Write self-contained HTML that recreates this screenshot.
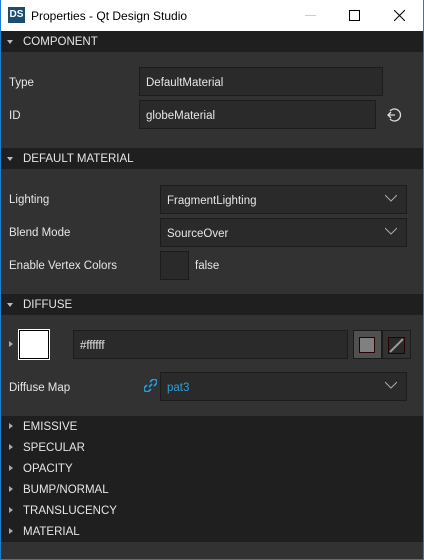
<!DOCTYPE html>
<html><head><style>
*{margin:0;padding:0;box-sizing:border-box}
body{width:424px;height:560px;background:#1a7fd4;font-family:"Liberation Sans",sans-serif;overflow:hidden;position:relative}
.win{position:absolute;left:1px;top:0;width:422px;height:559px;background:#323232}
.title{position:absolute;left:0;top:0;width:422px;height:31px;background:#fff;color:#000;font-size:12px}
.a{position:absolute}
.hdr{position:absolute;left:0;width:422px;height:21px;background:#1f1f1f;color:#e6e6e6;font-size:11.5px;line-height:23px}
.hdr span{position:absolute;left:22px}
.tri{position:absolute;left:6px;top:9px;width:0;height:0;border-left:3.5px solid transparent;border-right:3.5px solid transparent;border-top:4px solid #bbb}
.tr{position:absolute;left:8px;top:7px;width:0;height:0;border-top:3.5px solid transparent;border-bottom:3.5px solid transparent;border-left:4px solid #aaa}
.lbl{position:absolute;color:#e6e6e6;font-size:11.5px;margin-top:2px}
.fld{position:absolute;background:#2a2a2a;border:1px solid #1c1c1c;color:#e6e6e6;font-size:11.5px;line-height:30px;padding-left:6px}
.chev{position:absolute;right:9px;top:8px}
</style></head><body>
<div class="win">
<div class="title">
 <div class="a" style="left:7px;top:7px;width:17px;height:16px;background:#1b4f72;color:#fff;font-size:10px;font-weight:bold;line-height:16px;text-align:center">DS</div>
 <div class="a" style="left:30px;top:9px">Properties - Qt Design Studio</div>
 <div class="a" style="left:304px;top:15px;width:11px;height:1px;background:#ccc"></div>
 <div class="a" style="left:348px;top:10px;width:11px;height:11px;border:1px solid #000"></div>
 <svg class="a" style="left:393px;top:10px" width="11" height="11"><path d="M0 0L11 11M11 0L0 11" stroke="#000" stroke-width="1"/></svg>
</div>
<div class="hdr" style="top:31px"><div class="tri"></div><span>COMPONENT</span></div>
<div class="lbl" style="left:8px;top:75px">Type</div>
<div class="fld" style="left:138px;top:67px;width:244px;height:29px">DefaultMaterial</div>
<div class="lbl" style="left:8px;top:108px">ID</div>
<div class="fld" style="left:138px;top:100px;width:237px;height:29px">globeMaterial</div>
<svg class="a" style="left:385px;top:107px" width="16" height="16"><path d="M4 4A6 6 0 1 1 4 12" fill="none" stroke="#ddd" stroke-width="1.3"/><path d="M2 8H9M5 5L2 8L5 11" fill="none" stroke="#ddd" stroke-width="1.3"/></svg>
<div class="hdr" style="top:148px"><div class="tri"></div><span>DEFAULT MATERIAL</span></div>
<div class="lbl" style="left:8px;top:192px">Lighting</div>
<div class="fld" style="left:159px;top:185px;width:247px;height:29px">FragmentLighting<svg class="chev" width="12" height="8"><path d="M0 1L6 7L12 1" fill="none" stroke="#aaa"/></svg></div>
<div class="lbl" style="left:8px;top:225px">Blend Mode</div>
<div class="fld" style="left:159px;top:218px;width:247px;height:29px">SourceOver<svg class="chev" width="12" height="8"><path d="M0 1L6 7L12 1" fill="none" stroke="#aaa"/></svg></div>
<div class="lbl" style="left:8px;top:258px">Enable Vertex Colors</div>
<div class="fld" style="left:159px;top:251px;width:29px;height:29px"></div>
<div class="lbl" style="left:194px;top:258px">false</div>
<div class="hdr" style="top:294px"><div class="tri"></div><span>DIFFUSE</span></div>
<div class="tr" style="left:8px;top:341px"></div>
<div class="a" style="left:18px;top:330px;width:30px;height:29px;border:1px solid #000;background:#fff;outline:1px solid #fff"></div>
<div class="fld" style="left:72px;top:330px;width:275px;height:29px">#ffffff</div>
<div class="a" style="left:352px;top:330px;width:29px;height:29px;background:#505050;border:1px solid #1c1c1c"></div>
<div class="a" style="left:358px;top:337px;width:16px;height:16px;background:#808080;border:1px solid #2a0000"></div>
<div class="a" style="left:381px;top:330px;width:29px;height:29px;background:#323232;border:1px solid #1c1c1c"></div>
<svg class="a" style="left:387px;top:337px" width="17" height="17"><rect x=".5" y=".5" width="16" height="16" fill="#2a2a2a" stroke="#2a0000"/><path d="M2 15L15 2" stroke="#999" stroke-width="2"/></svg>
<div class="lbl" style="left:8px;top:380px">Diffuse Map</div>
<svg class="a" style="left:143px;top:379px" width="13" height="13"><path d="M5 8L8 5M6 3L8 1A2 2 0 0 1 12 5L10 7M7 10L5 12A2 2 0 0 1 1 8L3 6" fill="none" stroke="#2b9fd8" stroke-width="1.6"/></svg>
<div class="fld" style="left:159px;top:372px;width:247px;height:29px;color:#2b9fd8">pat3<svg class="chev" width="12" height="8"><path d="M0 1L6 7L12 1" fill="none" stroke="#aaa"/></svg></div>
<div class="a" style="left:0;top:416px;width:422px;height:126px;background:#1f1f1f"></div>
<div class="hdr" style="top:416px"><div class="tr"></div><span>EMISSIVE</span></div>
<div class="hdr" style="top:437px"><div class="tr"></div><span>SPECULAR</span></div>
<div class="hdr" style="top:458px"><div class="tr"></div><span>OPACITY</span></div>
<div class="hdr" style="top:479px"><div class="tr"></div><span>BUMP/NORMAL</span></div>
<div class="hdr" style="top:500px"><div class="tr"></div><span>TRANSLUCENCY</span></div>
<div class="hdr" style="top:521px"><div class="tr"></div><span>MATERIAL</span></div>
</div>
</body></html>
